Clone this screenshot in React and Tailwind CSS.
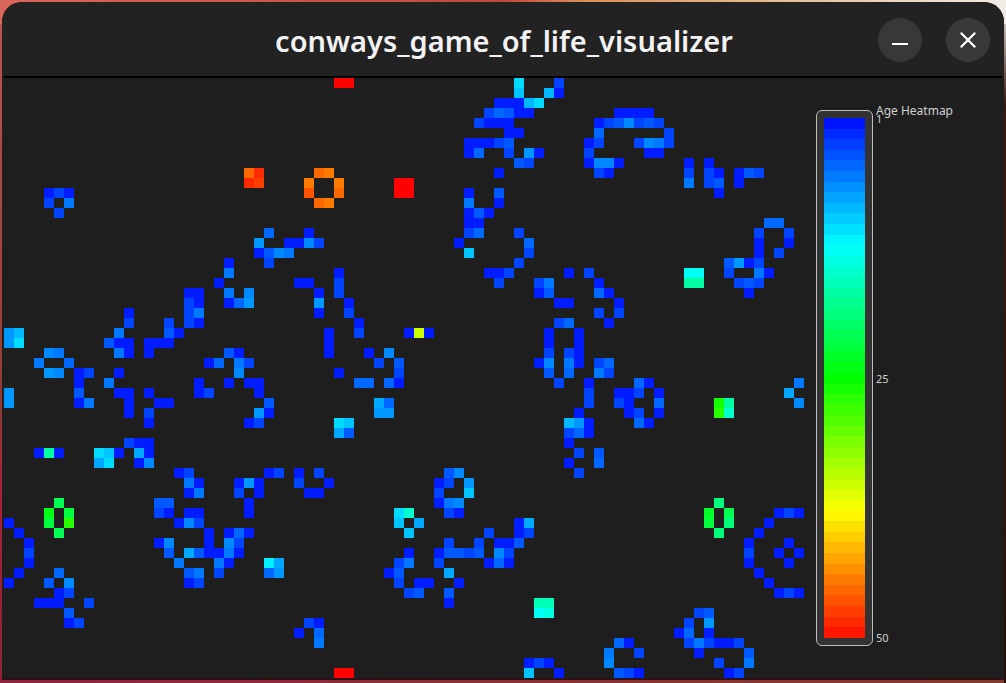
import React from 'react'

// row -> "col:age" pairs, ages run 0..49
const CELLS = [
  '33:49 34:49 51:10 55:1',
  '51:9 54:8 55:0',
  '49:0 50:0 51:0 52:8 53:10',
  '48:1 49:3 50:2 51:0 52:0 61:0 62:0 63:0 64:0',
  '47:1 48:0 49:0 50:0 59:0 60:1 61:2 62:5 63:1 64:2 65:1',
  '50:0 51:0 59:3 66:1',
  '46:0 47:0 48:0 49:1 50:2 58:0 59:1 63:1 64:5 65:4 66:1',
  '46:0 47:3 50:1 52:6 53:0 58:1 64:0 65:0',
  '51:2 52:1 58:0 59:5 60:5 61:0 68:0 70:0',
  '24:44 25:47 31:44 32:43 49:0 59:1 60:0 68:1 70:1 71:0 73:0 74:2 75:1',
  '24:47 25:46 30:43 33:43 39:49 40:49 68:4 70:1 71:2 73:0',
  '4:0 5:1 6:0 30:45 33:44 39:49 40:49 46:0 49:2 71:0',
  '4:1 6:4 31:44 32:43 46:4 49:0',
  '5:1 46:0 47:2 48:0',
  '46:0 47:0 76:3 77:3',
  '26:3 30:0 46:1 47:3 51:1 75:1 78:1',
  '25:6 28:0 29:0 30:5 31:1 45:0 52:3 75:0 78:0',
  '25:0 26:2 27:5 28:4 46:9 52:1 75:0 77:1',
  '22:0 26:1 51:1 72:2 73:6 74:0 75:1',
  '22:4 33:0 48:0 49:0 50:1 56:0 58:1 68:12 69:12 72:1 75:4 76:0',
  '21:0 29:0 30:0 33:1 49:1 53:1 54:4 59:0 68:16 69:16 73:1 74:2 75:1',
  '18:0 19:0 22:4 24:5 31:0 33:1 53:0 54:2 59:3 60:0 74:0',
  '18:1 19:0 22:0 23:3 24:6 31:6 34:0 55:0 56:0 61:0',
  '12:0 18:1 19:4 31:0 34:1 59:1 61:1',
  '12:1 16:1 18:1 19:0 35:0 55:1 56:3 60:0',
  '0:6 1:8 11:4 16:2 17:0 32:0 35:1 40:0 41:34 42:0 54:0 57:0',
  '0:6 1:10 10:2 11:0 12:0 14:0 15:0 16:0 32:0 54:0 57:0',
  '4:5 5:4 11:4 12:0 14:0 22:2 23:0 32:0 36:0 38:5 54:1 56:1 57:0',
  '3:4 6:3 20:0 21:3 23:4 24:1 37:1 39:2 53:0 54:5 56:4 57:0 59:1 60:3',
  '4:6 5:5 7:0 8:1 11:0 23:5 33:0 39:1 54:2 56:3 59:4 60:1',
  '7:0 10:4 19:0 22:0 24:0 25:0 35:3 36:3 38:3 39:0 55:1 58:0 63:3 64:0 79:4',
  '0:6 7:2 11:0 12:0 14:0 19:0 20:1 25:0 58:1 61:0 62:0 63:1 65:0 78:7',
  '0:6 7:0 8:4 12:0 15:0 16:0 26:2 37:7 38:3 58:1 61:1 62:0 65:3 71:25 72:16 79:5',
  '12:0 14:1 25:6 26:0 37:6 38:6 57:0 62:0 63:1 65:0 71:26 72:14',
  '14:0 24:0 25:1 33:10 34:9 56:8 57:6 58:0 63:3 64:0',
  '33:7 34:2 56:1 57:3 58:0',
  '12:1 13:0 14:0 56:0',
  '3:0 4:16 5:0 9:10 10:9 11:0 13:7 14:0 57:1 59:2',
  '9:7 10:10 13:0 14:5 56:0 59:3',
  '17:0 18:1 26:0 27:1 29:0 31:1 44:2 45:5 57:1',
  '18:4 19:0 23:0 24:6 25:0 29:1 32:0 43:0 44:1 46:6',
  '18:0 19:4 23:1 25:0 30:0 31:0 43:1 46:9',
  '5:20 15:2 16:2 24:0 43:0 44:4 45:5 71:18',
  '4:23 6:21 15:1 16:0 18:0 19:0 24:0 39:10 40:14 44:1 45:0 70:22 72:20 77:0 78:1 79:0',
  '0:0 4:21 6:26 17:0 18:5 19:1 39:9 41:7 51:0 52:7 70:21 72:18 76:0',
  '1:0 5:20 20:0 22:0 23:3 24:0 40:9 48:1 51:0 52:1 71:18 75:0',
  '2:0 15:0 16:5 20:0 22:5 23:1 44:1 47:1 49:0 50:0 51:2 74:0 78:0',
  '2:1 16:2 18:7 19:2 20:0 21:0 22:4 23:0 40:0 43:0 44:2 45:2 46:1 47:2 49:5 50:1 74:1 77:0 79:0',
  '2:0 17:4 21:4 22:0 26:11 27:7 39:1 40:4 43:1 48:0 49:3 50:0 74:0 78:0',
  '1:0 5:3 18:2 19:4 21:1 26:3 27:6 38:0 39:2 44:7 75:0',
  '0:0 4:2 6:5 18:0 19:1 39:1 41:0 42:0 45:0 76:0',
  '5:0 6:1 40:1 41:2 44:2 77:0 78:1 79:0',
  '3:0 4:0 5:0 8:1 44:0 53:15 54:15',
  '6:2 53:12 54:13 69:1 70:2',
  '6:0 7:1 30:1 31:0 68:1 70:6',
  '29:0 31:3 67:0 68:3 70:0',
  '31:4 61:3 62:0 68:1 69:4 70:1 71:0 72:0 73:1',
  '60:4 63:1 69:0 74:2',
  '52:0 53:1 54:0 60:5 71:1 74:4',
  '33:49 34:49 52:9 55:0 61:2 62:1 63:0 72:0 73:1',
]

const BLUES = [28, 68, 88, 104, 120, 136, 152, 168, 184, 196, 220, 240]

const ageColor = (age) => {
  if (age < BLUES.length) return `rgb(0,${BLUES[age]},255)`
  return `hsl(${Math.max(0, 235 - 4.79 * age)},100%,50%)`
}

const bandColor = (i) => `hsl(${235 - 4.79 * i},100%,50%)`

const Board = () => (
  <svg width="800" height="600" viewBox="0 0 800 600" shapeRendering="crispEdges" className="block shrink-0">
    {CELLS.flatMap((row, r) =>
      row.split(' ').map((cell) => {
        const [c, age] = cell.split(':').map(Number)
        return <rect key={`${r}-${c}`} x={c * 10} y={r * 10} width="10" height="10" fill={ageColor(age)} />
      })
    )}
  </svg>
)

const Legend = () => (
  <div className="relative ml-3 mt-8 h-[536px] w-[57px] shrink-0 rounded-md border border-[#bdbdbd] bg-[#333333] p-[7px]">
    <div className="flex h-[520px] w-[41px] flex-col">
      {Array.from({ length: 49 }, (_, i) => (
        <div key={i} className="flex-1" style={{ backgroundColor: bandColor(i) }} />
      ))}
    </div>
    <span className="absolute left-[59px] top-[-8px] whitespace-nowrap text-[12px] leading-4 text-[#d0d0d0]">Age Heatmap</span>
    <span className="absolute left-[59px] top-[2px] text-[11px] leading-3 text-[#d0d0d0]">1</span>
    <span className="absolute left-[59px] top-[262px] text-[11px] leading-3 text-[#d0d0d0]">25</span>
    <span className="absolute left-[59px] top-[521px] text-[11px] leading-3 text-[#d0d0d0]">50</span>
  </div>
)

const WindowButton = ({ children }) => (
  <button type="button" className="flex h-11 w-11 items-center justify-center rounded-full bg-[#383838] text-white">
    {children}
  </button>
)

export default function App() {
  return (
    <div className="h-[683px] w-[1006px] overflow-hidden bg-[linear-gradient(to_right,#d9675c_0%,#c4473c_50%,#d98f58_58%,#e5b88c_75%,#f2ece6_100%),linear-gradient(to_bottom,#f2ece6_0%,#3a1a10_15%,#241008_100%),linear-gradient(to_right,#8f2440_0%,#8c3036_50%,#823a30_100%),linear-gradient(to_bottom,#b9564f_0%,#8f3a35_60%,#a8203a_72%,#8a2238_100%)] bg-no-repeat px-[2px] pb-[3px] pt-[2px] font-['Noto_Sans',sans-serif] [background-position:top,right,bottom,left] [background-size:100%_24px,2px_100%,100%_4px,100%_100%]">
      <div className="flex h-[678px] flex-col overflow-hidden rounded-t-[20px] bg-[#1e1e1e]">
        <header className="grid h-[74px] grid-cols-[1fr_auto_1fr] items-center bg-[#222222] pt-[2px]">
          <div />
          <h1 className="ml-[2px] text-[29px] font-semibold leading-none text-[#f2f2f2]">conways_game_of_life_visualizer</h1>
          <div className="flex justify-end gap-6 pr-[14px]">
            <WindowButton>
              <svg width="16" height="16" viewBox="0 0 16 16"><rect x="0" y="11" width="16" height="2" fill="#fff" /></svg>
            </WindowButton>
            <WindowButton>
              <svg width="16" height="16" viewBox="0 0 16 16" fill="none" stroke="#fff" strokeWidth="2.2"><path d="M0.8 0.8 15.2 15.2M15.2 0.8 0.8 15.2" /></svg>
            </WindowButton>
          </div>
        </header>
        <div className="mx-[2px] h-[2px] shrink-0 bg-black" />
        <main className="flex h-[600px] shrink-0 pl-[2px]">
          <Board />
          <Legend />
        </main>
        <div className="h-[2px] shrink-0 bg-[#2a1214]" />
      </div>
    </div>
  )
}
